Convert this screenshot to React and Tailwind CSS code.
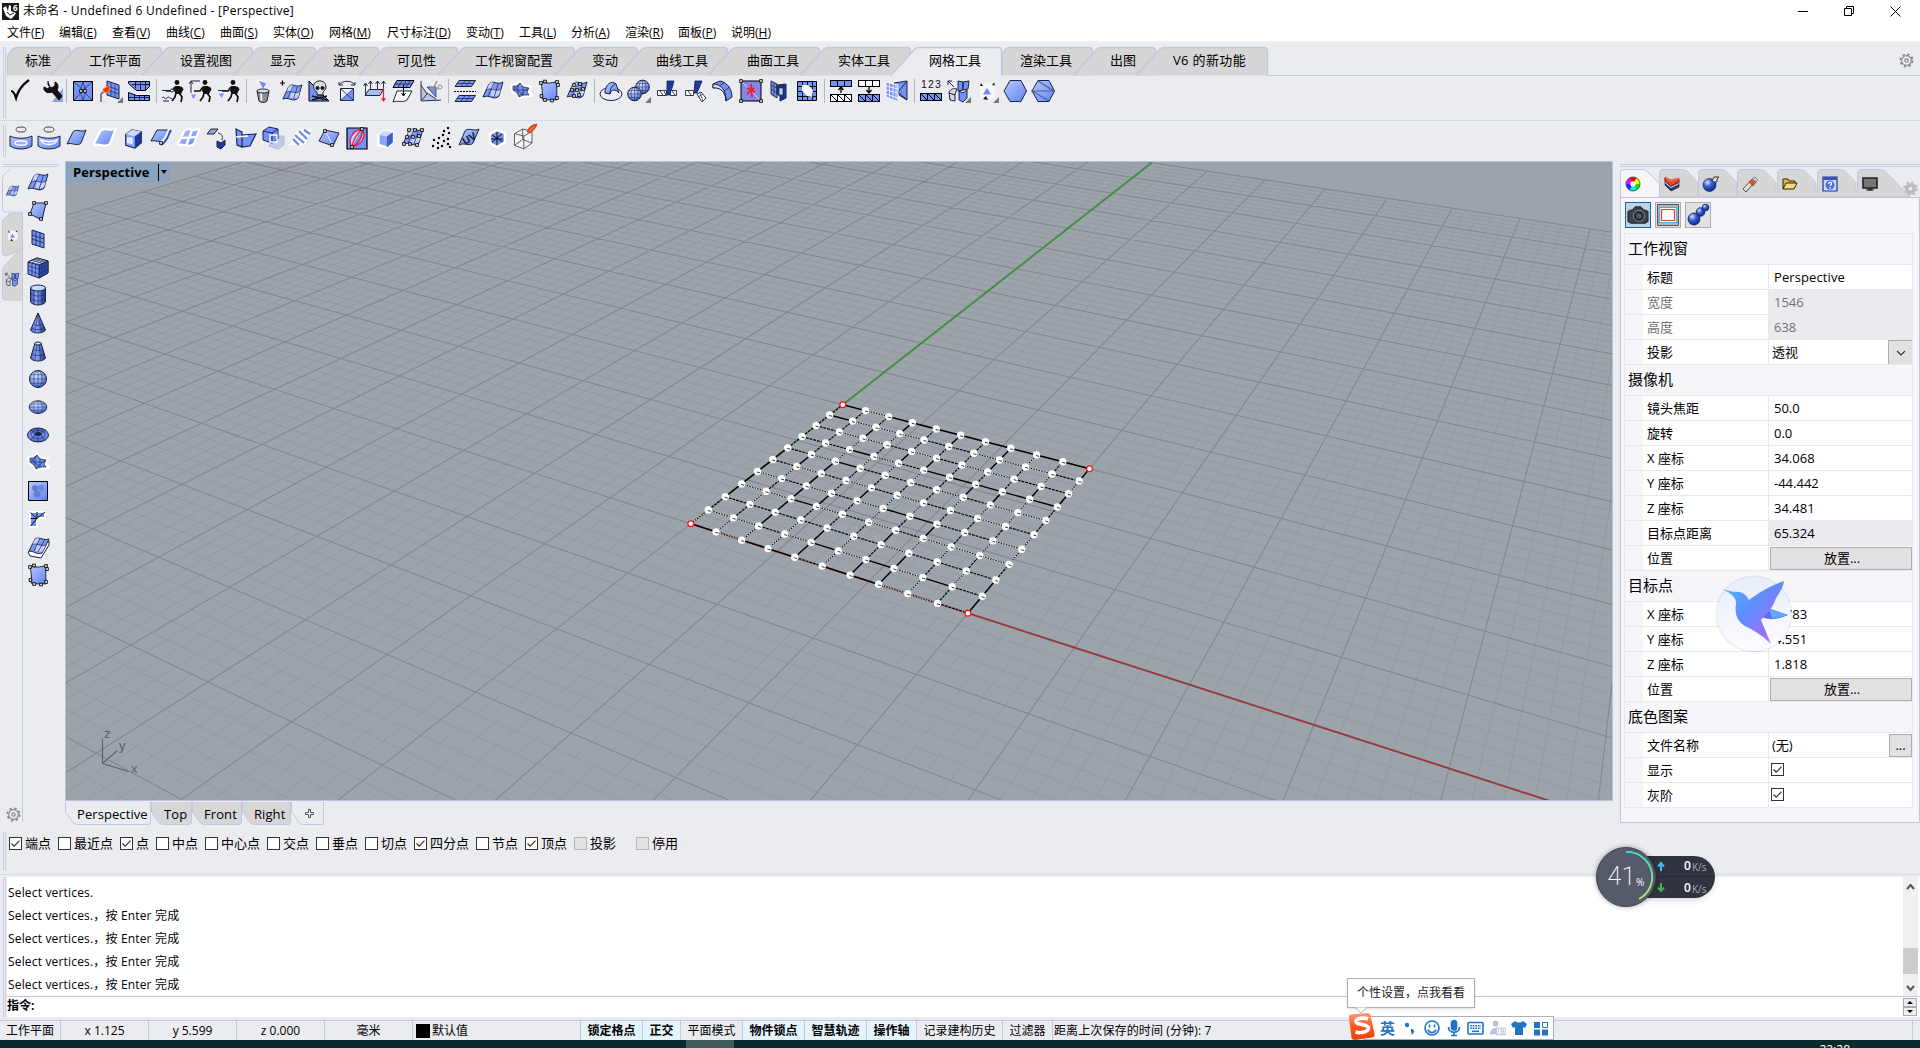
import React from "react";

const FONT = "font-['Open_Sans','Noto_Sans_CJK_SC',sans-serif]";
const K = "#1c2444";
const B = "#7391f6";
const N = "#1c3a9c";

/* ---------- icon primitives (24 x 24 drawing box) ---------- */
const Ico = ({ children, className = "size-6" }) => (
  <svg viewBox="0 0 24 24" className={className + " shrink-0"} fill="none" stroke={K} strokeWidth="1">
    {children}
  </svg>
);
const PATCH = "M2 18 8 6c4-4 8 1 13-2l-5 13c-4 4-9-1-14 1Z";
const Patch = ({ glow }) => (
  <>
    {glow && <path d={PATCH} stroke="#fff" strokeWidth="4.500" strokeLinejoin="round" />}
    <path d={PATCH} fill="url(#gb)" stroke={glow ? "none" : K} />
  </>
);
const MeshPatch = () => (
  <>
    <path d="M2 18 8 5c4-5 8 2 14-2l-4 14c-5 5-10-2-16 1Z" fill="#7f9bf8" />
    <path d="M8 5c2-2 3-2 5-1l-2 6c-2-1-3 0-5.500 1.500ZM11 10c3 1 6 2 9 0l-2 6c-3 2-6 1-8.500.5Z" fill="#c3d1ff" stroke="none" />
    <path d="M5 11.500c5-4 9 2 15-1.500M7 17l6-13M13 18l4.500-13.500" strokeWidth=".7" />
  </>
);
const Tri = ({ x, y, f = "#8390f8" }) => <path d={`M${x} ${y}h7l-3.500 6Z`} fill={f} stroke="#fff" strokeWidth=".8" />;
const Sq = ({ pts }) => pts.map(([x, y], i) => <rect key={i} x={x - 1.3} y={y - 1.3} width="2.6" height="2.6" fill="#fff" stroke="#000" strokeWidth=".9" />);
const Corner = () => <path d="M24 18v6h-6Z" fill="#777" stroke="none" />;
const Runner = ({ k }) => (
  <>
    <circle cx="16" cy="3.500" r="2.400" fill="#111" stroke="none" />
    <path d="M14 7h5l3 4-2 4h-5l-2-3Z" fill="#111" stroke="none" />
    <path d="M14 8l-3 4H5M15 14l-1 4-3 4M18 14l3 4-1 5M20 8l2 3" stroke="#111" strokeWidth="1.700" fill="none" />
    {k === 0 && <><path d="M1 11.500h9M1 19c2-3 3 3 5 0s3 2 5 0M2 22h6" /><circle cx="11" cy="11.500" r="1.500" fill="#fff" /></>}
    {k === 1 && <><path d="M2 14V3M0 5l2-3 2 3M2 2h9" /><Tri x={1} y={15} /></>}
    {k === 2 && <><path d="M1 11.500h9" /><Tri x={1} y={14} /></>}
  </>
);
const Ball = ({ cx, cy, r }) => (
  <>
    <circle cx={cx} cy={cy} r={r} fill="url(#gs)" />
    <path d={`M${cx - r} ${cy}h${2 * r}M${cx} ${cy - r}v${2 * r}M${cx - r * 0.87} ${cy - r / 2}h${r * 1.74}M${cx - r * 0.87} ${cy + r / 2}h${r * 1.74}`} strokeWidth=".5" />
    <ellipse cx={cx} cy={cy} rx={r / 2} ry={r} strokeWidth=".5" />
  </>
);
const Strip = ({ y, f = "#fff" }) => (
  <><rect x="1.500" y={y + 0.5} width="21" height="7" fill={f} stroke="#000" /><path d={`M8.500 ${y}v8M15.500 ${y}v8`} stroke="#000" /><path d={`M2 ${y + 1}l6 6M9 ${y + 1}l6 6M16 ${y + 1}l6 6`} stroke="#000" /></>
);
const Cells = ({ y, f }) => <><rect x="1.500" y={y + 0.5} width="21" height="6" fill={f} stroke="#000" /><path d={`M8.500 ${y}v7M15.500 ${y}v7`} stroke="#000" /></>;
const Scatter = () => (
  <>
    <path d="M5 5 12 4 20 5 20 18 12 21 5 19Z" fill="#f5f5fa" stroke="none" />
    <path d="M6 4 8 7H5ZM17 5l3-1-1 3ZM8 20l3-3 2 4Z" fill="#111" stroke="none" />
    <path d="M12 8l5 8H7Z" fill="#7b86fa" stroke="#fff" />
  </>
);
const Match = () => (
  <>
    <path d="M1 2l6 6M1 2v4M1 2h4" />
    <path d="M11 2l5 1v8l-5 1ZM16 3l6-1-1 8-5 1Z" fill={B} />
    <path d="M12 12l4 2 4-3v8l-4 4-4-2Z" fill={B} />
    <path d="M2 13c2-3 4-4 8-3l-2 5v7l-5-1Z" fill="#d9dade" /><path d="M2 14l6 2" />
  </>
);
const Blob = () => (
  <>
    <path d="M3 7l5-1 3-3 3 4 7 1-2 4 3 4-7 1-5 2-1-4-5-3Z" fill={B} stroke="#fff" strokeWidth="3.500" />
    <path d="M4 7l5 0 2-3 3 4 6 1-2 4 2 3-6 0-4 2-2-4-4-3Z" fill={B} strokeWidth=".7" />
    <path d="M4 11h15M9 5v10M14 7v10M5 8l9 8M11 4l-6 7M19 9l-9 8" strokeWidth=".6" />
  </>
);
const Pillow = () => (
  <>
    <path d="M4 3c5 1 9 2 17-1-2 6-1 12-1 19-5-1-10 1-15-1 1-6 0-11-1-17Z" fill="url(#gb)" />
    <Sq pts={[[4, 4], [8, 2.5], [20, 3], [21, 6], [20, 19], [15, 21.5], [8, 21], [4.5, 17]]} />
  </>
);

const row1 = [
  <Ico><path d="M2 12c3 0 4 4 5 7C9 11 13 6 20 1" stroke="#000" strokeWidth="2.200" /></Ico>,
  <Ico className="ml-1.5 size-6"><path d="M12 23h11V9Z" fill="#8fa3dc" stroke="none" /><path d="M8 2v4l3 3 4-2V3c3 1 4 5 2 8l5 6-3 4-7-8c-5 2-9-1-8-5l4 2 2-3" fill="#111" stroke="#111" /></Ico>,
  "|",
  <Ico><path d="M2.500 2.500h19v19h-19Z" fill={B} stroke="#000" /><path d="M3 3l9 8 9-8M3 21l9-9 9 9M12 3 9 12l3 9 3-9Z" strokeWidth=".7" /><Sq pts={[[10, 12], [14, 12]]} /></Ico>,
  <Ico><path d="M8 2l12 4v14L8 16Z" fill={B} /><path d="M8 7l12 4M8 11l12 4M12 4v13M16 6v13" strokeWidth=".6" /><path d="M2 23v-8l5-4" stroke="#777" strokeWidth="1.800" /><path d="M4 12c-1-4 5-3 6-6 2 4 0 7-3 8Z" fill="#f22d14" stroke="#ff9a18" /><Corner /></Ico>,
  <Ico><path d="M1.500 2.500h21v5l-4 4h-9l-8-7ZM1.500 13.500l8 3h13v5h-21Z" fill={B} stroke="#000" /><path d="M5 5.500h18M8.500 2v7M13.500 2v9M18.500 2v9M7.500 15v7M12.500 16v6M17.500 16v6M2 18.500h20" stroke="#000" strokeWidth=".8" /></Ico>,
  "|",
  <Ico><Runner k={0} /></Ico>, <Ico><Runner k={1} /></Ico>, <Ico><Runner k={2} /></Ico>,
  "|",
  <Ico><path d="M7 1l9 3-4 7Z" fill="#7d88f8" stroke="#fff" /><path d="M6 12l2 10c3 2 6 2 8 0l2-10Z" fill="#8d8d8d" /><path d="M10 13l.5 9" stroke="#eee" strokeWidth="2" /><ellipse cx="12" cy="12" rx="6" ry="2" fill="#ddd" /></Ico>,
  <Ico><g transform="translate(2 3) scale(.95)"><MeshPatch /></g><path d="M1 4h5M3.500 1.500v5" stroke="#000" strokeWidth="1.200" /></Ico>,
  <Ico><path d="M2 2v20h20Z" fill={B} stroke="#000" /><path d="M5 17l15 4M20 17 5 21" stroke="#111" strokeWidth="1.600" /><path d="M7 5c3-5 12-4 12 3 0 3-2 4-3 5v3h-6v-3C7 12 6 8 7 5Z" fill="#ddd" stroke="#222" /><circle cx="10.500" cy="9" r="1.600" fill="#000" /><circle cx="15.500" cy="9" r="1.600" fill="#000" /><path d="M11 15v3M13 15v3M15 15v3" /></Ico>,
  <Ico><path d="M4 6C8 1 16 1 20 6M20 6V3M20 6h-4M4 6V3M4 6h4" /><path d="M5.500 9.500h13v12h-13Z" fill="#e8edff" stroke="#222" /><path d="M18.500 9.500v12h-13Z" fill={B} strokeWidth=".7" /><path d="M6 10l12 11" strokeWidth=".8" /></Ico>,
  <Ico><path d="M6 10.500h14l-3 6H2Z" fill="#a9bbf5" /><path d="M2.500 16V5M7.500 11V2M14.500 11V2M20.500 11V2M.5 7l2-3 2 3M5.500 5l2-3 2 3M12.500 5l2-3 2 3M18.500 5l2-3 2 3" strokeWidth=".9" /><path d="M20.500 9v13M18.500 19l2 3 2-3" stroke="#e8202a" strokeWidth="1.200" /></Ico>,
  <Ico><path d="M6 1.500h17l-4 7H2Z" fill={B} stroke="#000" /><path d="M4 5h17M11 2 7 8M15 2l-3 6M19 2l-4 6" strokeWidth=".8" /><path d="M6 12h15l-5 9c-5 3-9 0-14 2Z" fill="#fff" /><path d="M12.500 6v11M10.500 14l2 3 2-3" stroke="#000" /></Ico>,
  <Ico><path d="M2 22V8l13 11 7 3Z" fill="#b9c4e6" stroke="none" /><path d="M8 8h9v10Z" fill={B} strokeWidth=".7" /><path d="M2 2v20M2 22l20-1M2 6l6 9-5 6M8 14l9 6" strokeWidth=".9" /><path d="M13 12l5-10M11 8l8 2" stroke="#8e8e8e" strokeWidth="1.400" /><circle cx="21" cy="8" r="2" stroke="#8e8e8e" /></Ico>,
  "|",
  <Ico><path d="M6 1.500h16.500l-4 6H2Z" fill={B} stroke="#222" /><path d="M6 16.500h16.500l-4 6H2Z" fill={B} stroke="#222" /><path d="M4 4.500h17M12 2 8 7M17 2l-4 5M4 19.500h17M12 17l-4 5M17 17l-4 5" strokeWidth=".7" /><path d="M1 12.500h22" stroke="#000" strokeDasharray="2 1" /></Ico>,
  <Ico><MeshPatch /></Ico>,
  <Ico><Blob /></Ico>,
  <Ico><Pillow /></Ico>,
  <Ico><MeshPatch /><Sq pts={[[9, 6], [15, 5], [7, 11], [12, 11], [18, 10], [9, 17], [14, 16]]} /></Ico>,
  "|",
  <Ico><ellipse cx="12" cy="15" rx="11" ry="6.500" fill="#eceef4" /><path d="M6 14C6 5 13 1 17 5l3 9c-3-4-8-4-9 1Z" fill="url(#gb)" /><path d="M11 15c0-6 3-9 5-10" /></Ico>,
  <Ico><Ball cx={15.5} cy={8} r={6.8} /><Ball cx={7.5} cy={15} r={6.8} /><Corner /></Ico>,
  <Ico><path d="M12 2h7l-4 14h-3Z" fill={N} stroke="#0d1d5c" strokeWidth=".8" /><path d="M2.500 11.500h9v5h-9ZM15.500 11.500h6v5h-6ZM5 12l3 4M9 12l2 4M17 12l3 4" fill="#fff" strokeWidth=".9" /></Ico>,
  <Ico><path d="M12 2h7l-5 12h-3Z" fill={N} stroke="#0d1d5c" strokeWidth=".8" /><path d="M2.500 11.500h8v5h-8ZM5 12l3 4M14 15l4-2 5 6-4 4Z" fill="#fff" strokeWidth=".9" /><path d="M17 14l3 8M15 18l5-3" strokeWidth=".7" /></Ico>,
  <Ico><path d="M2 5l7-3c6 1 12 7 12 16l-6 4C15 13 9 7 2 9Z" fill={B} /><path d="M2 5c8 0 13 6 13 17C15 13 9 8 2 9Z" fill="#dfe3ee" /><path d="M8 7l6-4M13 12l6-4" strokeWidth=".8" /></Ico>,
  <Ico><path d="M2 2h20v20H2Z" fill="#8284e6" stroke="#000" /><path d="M2 2l20 20" stroke="#d4d8f5" /><path d="M12 5l1 13M8 15l7-6M8 9l8 4" stroke="#ee1c25" strokeWidth="1.800" /><Sq pts={[[2, 2], [22, 2], [2, 22], [22, 22]]} /></Ico>,
  <Ico><path d="M4 2l6 3v14l-6-4Z" fill={B} /><path d="M10 6l9-1v14l-6 3v-5l-3-2Z" fill={N} /><path d="M7 4v13M4 6l6 3M4 10l6 4M16 5v15M10 8l9-1" strokeWidth=".7" /><path d="M12 9h4v7h-4Z" fill="#c5d2ff" strokeWidth=".7" /></Ico>,
  <Ico><path d="M2.500 2.500h19v19h-19Z" fill={B} stroke="#000" /><path d="M7.500 2v20M12.500 2v20M17.500 2v20M2 7.500h20M2 12.500h20M2 17.500h20" stroke="#000" strokeWidth=".9" /><path d="M7 6h6l5 5-1 7-5-1-5-5Z" fill="#f4f5ff" stroke="none" /></Ico>,
  "|",
  <Ico><Cells y={1} f={B} /><Strip y={15} /><path d="M12 14V8M9.500 11 12 8l2.500 3" stroke="#000" strokeWidth="1.300" /></Ico>,
  <Ico><Cells y={1} f="#fff" /><Strip y={15} f={B} /><path d="M12 8v6M9.500 11 12 14l2.500-3" stroke="#000" strokeWidth="1.300" /></Ico>,
  <Ico><path d="M9 4l13-2v19l-8-5Z" fill={B} /><path d="M22 2 13 13l9 8" /><path d="M1 3l12 3v17L1 18Z" fill="#7c92ee" stroke="#fff" /><path d="M4.500 4v16M8 5v16M11 6v16M1 7l12 3M1 11l12 3M1 15l12 4" stroke="#fff" strokeWidth=".8" /></Ico>,
  "|",
  <Ico><text x="12.500" y="9" textAnchor="middle" fontSize="10.500" letterSpacing="1.200" fill="#111" stroke="none" fontFamily="Liberation Sans">123</text><Strip y={14} f={B} /></Ico>,
  <Ico><Match /><Corner /></Ico>,
  <Ico><Scatter /><Corner /></Ico>,
  <Ico><path d="M7 1.500h11l5.500 10.500L18 22.500H7L1 12Z" fill="url(#gb)" /></Ico>,
  <Ico><path d="M7 1.500h11l5.500 10.500L18 22.500H7L1 12Z" fill="url(#gb)" /><path d="M7 2l16 10H1l17 10" strokeWidth="1.100" stroke="#4a5f96" /></Ico>,
];

const Basin = ({ n }) => (
  <>
    <ellipse cx="12" cy="3.500" rx="5" ry="2.500" stroke="#444" />
    <path d="M1 10c6 3 16 3 22 0v10c-6 4-16 4-22 0Z" fill="url(#gb)" />
    <path d={n ? "M4 14c5 2 11 2 16 0-1 6-15 6-16 0Z" : "M6 17c0-3 12-3 12 0s-12 3-12 0Z"} fill="#9fb4ff" stroke="#fff" strokeWidth="1.500" />
  </>
);
const Cube = ({ s }) => (
  <><path d="M4 8l7-5 10 2v12l-7 6-10-3Z" fill="#8ba5fa" stroke={s ? "#fff" : K} strokeWidth={s ? 3 : 1.2} /><path d="M4 8l10 2 7-5-10-2Z" fill="#cdd8ff" stroke="none" /><path d="M14 10l7-5v12l-7 6Z" fill={s ? "#3f5fc8" : N} stroke="none" /></>
);
const row2 = [
  <Ico><Basin n={0} /></Ico>, <Ico><Basin n={1} /></Ico>,
  <Ico><Patch /></Ico>, <Ico><Patch glow /></Ico>,
  <Ico><g transform="translate(1 1) scale(.92)"><Cube /><path d="M6 12h5v6l-5-1Z" fill="#dfe6ff" stroke="#fff" /></g></Ico>,
  <Ico><path d="M2 15 8 4h12l-6 10c-4 3-8 0-12 1Z" fill="url(#gb)" /><path d="M22 4c-3 5-3 11-10 15" stroke="#2b4bb5" strokeWidth="2" /><path d="M20 3c-3 5-3 10-9 13" stroke="#fff" strokeWidth="1.600" /><Sq pts={[[12, 17]]} /></Ico>,
  <Ico><Patch glow /><path d="M4 12l16-1M9 20l6-16" stroke="#fff" strokeWidth="2.500" /></Ico>,
  <Ico><path d="M2 8l4-5h7l-4 5Z" fill="#9ba7c8" /><path d="M13 7c4 1 5 3 4 7" /><path d="M12 15l4 2 4-3v5l-4 4-4-2Z" fill={N} /></Ico>,
  <Ico><path d="M3 3l6 3v15l-5-2ZM9 9l14-1-6 12-8 1Z" fill={B} strokeWidth="1.200" /><path d="M3 11l12-1" stroke="#fff" strokeWidth="1.500" /></Ico>,
  <Ico><path d="M12 10h11v9l-6 4-9-3Z" fill="#c3cbe8" stroke="#b4bbd8" /><path d="M2 5l6-4 9 2v10l-6 4-9-3Z" fill={B} /><path d="M2 5l9 2v9M11 7l6-4" /><path d="M9 9h7v7H9Z" stroke="#fff" strokeWidth="1.300" /></Ico>,
  <Ico><path d={PATCH} fill="#fff" stroke="#fff" strokeWidth="2" /><path d="M10 5l8 8M6 9l9 8M15 4l6 4M4 13l6 6" stroke="#6d88dc" strokeWidth="2.200" /></Ico>,
  <Ico><path d="M2 15 8 4l14 3-6 13Z" fill="url(#gb)" /><path d="M8 4l8 16" stroke="#eef" /><Sq pts={[[8, 5], [15, 19]]} /></Ico>,
  <Ico><path d="M2 2h20v21H2Z" fill={B} stroke="#000" strokeWidth="1.200" /><path d="M17 3C8 4 2 14 7 21c9-2 15-10 10-18ZM17 3C12 8 8 14 7 21M17 3c1 8-3 14-10 18" stroke="#e3234a" strokeWidth="1.300" fill="#cfd4f5" /><Sq pts={[[17, 3], [7, 21]]} /></Ico>,
  <Ico><g transform="translate(2 2) scale(.85)"><Cube s /></g></Ico>,
  <Ico><MeshPatch /><Sq pts={[[8, 4], [14, 4], [21, 4], [6, 11], [12, 11], [18, 10], [3, 18], [9, 18], [16, 19]]} /></Ico>,
  <Ico>{[[19, 2], [15, 5], [20, 7], [14, 9], [10, 12], [19, 13], [5, 14], [15, 15], [9, 17], [4, 20], [13, 20], [19, 18], [21, 21], [9, 22]].map(([x, y], i) => <circle key={i} cx={x} cy={y} r="1.200" fill="#000" stroke="none" />)}</Ico>,
  <Ico><path d="M2 19 8 5c4-4 9 1 14-2l-6 14c-4 4-9-1-14 2Z" fill="url(#gb)" /><text x="12" y="16" fontSize="10" fontWeight="700" textAnchor="middle" fill="#111" stroke="none" transform="rotate(-30 12 12)" fontFamily="Liberation Sans">UV</text></Ico>,
  <Ico><path d="M5 8l7-4 8 3v9l-8 5-7-4Z" fill={B} stroke="#fff" strokeWidth="2.500" /><path d="M12 6v13M7 9l11 7M17 8 7 16M6 13h12" stroke="#111" /></Ico>,
  <Ico className="-mt-1 size-7"><path d="M3 10l7-4 8 2v10l-7 5-8-3ZM3 10l8 2v11M11 12l7-4M10 6v9l-7 5M10 15l8 3" stroke="#555" strokeWidth=".8" fill="#fff" fillOpacity=".4" /><path d="M14 8c1-3 5-6 8-6-1 3-4 6-6 7Z" fill="#f26a1b" stroke="#c33" /></Ico>,
];

const side = [
  <Ico><MeshPatch /></Ico>,
  <Ico><path d="M8 4h12l-4 17L4 15Z" fill="url(#gb)" /><Sq pts={[[8, 4], [20, 4], [15, 20], [4, 15]]} /></Ico>,
  <Ico><path d="M6 3l12 4v14L6 17Z" fill={B} /><path d="M10 4v14M14 6v14M6 8l12 4M6 12l12 4" strokeWidth=".8" /></Ico>,
  <Ico><path d="M2 7l9-4 11 3v12l-9 5-11-4Z" fill={B} /><path d="M2 7l11 3 9-4-11-3Z" fill="#d3dcff" /><path d="M13 10l9-4v12l-9 5Z" fill="#2f4fb8" /><path d="M6 8v12M9.500 9v12M2 11l11 3 9-4M2 15l11 4 9-5M16 9v12M19 7v12M5 5l11 3M8 4l11 3M6 8l8-4M10 9l8-4" strokeWidth=".6" /></Ico>,
  <Ico><path d="M4.500 5v14c3 4 12 4 15 0V5Z" fill="url(#gd)" /><ellipse cx="12" cy="5" rx="7.500" ry="3" fill="#c9d6ff" /><path d="M4.500 10c3 4 12 4 15 0M4.500 15c3 4 12 4 15 0M8 8v13M12 8v14M16 8v13" strokeWidth=".6" /></Ico>,
  <Ico><path d="M12 2 4.500 19c2 4 13 4 15 0Z" fill="url(#gd)" /><path d="M12 2 9 21M12 2l3 19M8 13c2 2 6 2 8 0M6 17c2 2 10 2 12 0" strokeWidth=".6" /></Ico>,
  <Ico><path d="M9 4 4.500 19c2 4 13 4 15 0L15 4Z" fill="url(#gd)" /><ellipse cx="12" cy="4.500" rx="3" ry="1.500" fill="#dce4ff" /><path d="M11 6 9 21M13 6l2 15M7.500 10c2 2 7 2 9 0M6 15c2 2 10 2 12 0" strokeWidth=".6" /></Ico>,
  <Ico><Ball cx={12} cy={12} r={8.5} /></Ico>,
  <Ico><g transform="translate(0 3.500) scale(1 .72)"><Ball cx={12} cy={12} r={8.8} /></g></Ico>,
  <Ico><ellipse cx="12" cy="12" rx="10.500" ry="7" fill="url(#gt)" /><ellipse cx="12" cy="11" rx="3.500" ry="1.500" fill="#12245e" /><path d="M5 7l3 3M19 7l-3 3M12 5v4M12 13v6M5 17l4-5M19 17l-4-5" strokeWidth=".6" /><ellipse cx="12" cy="11.500" rx="7" ry="4" strokeWidth=".6" /></Ico>,
  <Ico><Blob /></Ico>,
  <Ico><path d="M2.500 2.500h19v19h-19Z" fill="url(#gb)" stroke="#000" /><circle cx="9" cy="9" r="3" fill="#3d59b5" stroke="none" opacity=".6" /><circle cx="15" cy="9" r="3" fill="#4c68c8" stroke="none" opacity=".5" /><circle cx="11" cy="15" r="3.500" fill="#3d59b5" stroke="none" opacity=".5" /></Ico>,
  <Ico><path d="M4 5h15v6h-8v9H4Z" fill={B} stroke="#fff" strokeWidth="2" /><path d="M4.500 5.500l6.500 6V5M19 5l-8 6.500H4.500M11 11.500l-6.500 7.500" stroke="#111" /></Ico>,
  <Ico><path d="M2 17l2 4 11 2 8-13V6Z" fill="#fff" /><path d="M3 16 9 4c4-3 8 2 14 0l-7 14c-5 2-8-2-13-2Z" fill="#7f9bf8" /><path d="M9 4c2-1 3-1 5-.5l-3 6-5 .5ZM11 10c3 1 5 1 9 0l-4 7-7-1Z" fill="#c3d1ff" stroke="none" /><path d="M6 10c5-3 9 2 14 0M8 16l6-13M12 17l7-13" strokeWidth=".7" /></Ico>,
  <Ico><Pillow /></Ico>,
];

/* ---------- perspective projection of the construction plane ---------- */
const CAM = [34.068, -44.442, 34.481];
const TGT = [5.783, 4.551, 1.818];
const FOCAL = (319 * 50) / 12;
const sub = (a, b) => a.map((v, i) => v - b[i]);
const dot = (a, b) => a[0] * b[0] + a[1] * b[1] + a[2] * b[2];
const norm = (a) => { const l = Math.hypot(...a); return a.map((v) => v / l); };
const FWD = norm(sub(TGT, CAM));
const RGT = norm([FWD[1], -FWD[0], 0]);
const UP = [RGT[1] * FWD[2], -RGT[0] * FWD[2], RGT[0] * FWD[1] - RGT[1] * FWD[0]];
const view = (x, y) => { const d = sub([x, y, 0], CAM); return [dot(d, RGT), dot(d, UP), dot(d, FWD)]; };
const toScreen = ([r, u, f]) => [773 + (r / f) * FOCAL, 319 - (u / f) * FOCAL];
const project = (x, y) => toScreen(view(x, y));
const segment = (x1, y1, x2, y2) => {
  let a = view(x1, y1), b = view(x2, y2);
  const near = 8;
  if (a[2] < near && b[2] < near) return "";
  const cut = (p, q) => { const t = (near - p[2]) / (q[2] - p[2]); return p.map((v, i) => v + t * (q[i] - v)); };
  if (a[2] < near) a = cut(a, b);
  if (b[2] < near) b = cut(b, a);
  const p = toScreen(a), q = toScreen(b);
  return `M${p[0].toFixed(1)} ${p[1].toFixed(1)}L${q[0].toFixed(1)} ${q[1].toFixed(1)}`;
};
const E = 70;
let minor = "", major = "";
for (let i = -E; i <= E; i++) {
  const s = segment(i, -E, i, E) + segment(-E, i, E, i);
  if (i % 5 === 0) major += s; else minor += s;
}
/* edge weight per mesh cell: S solid, M broken, D dotted */
const ALONG_X = ["SDSSMSSDDM", "DDMDSDSDSM", "MMMMMMDMMM", "DDSDMDMDDD", "DMDMDSSMMD", "MDMDMDMMDM", "MDSMMMDMDD", "MMSDMSSSSS", "MDDMDMDDMM", "SDDDMMDDDM", "SDSSSSSSSS"];
const ALONG_Y = ["DMSSSSMMMM", "DMDMDSMMMM", "DSSSSSDDSM", "DDMSMMDMDS", "SSMMSMDSMM", "DDMDDMDSMS", "SMSMDMMMMM", "SSDSMDSMSS", "DMDMMDSMMD", "MDMDMDDSDM", "SSMDDMMSDS"];
const meshEdges = { S: "", M: "", D: "" };
for (let j = 0; j <= 10; j++)
  for (let i = 0; i < 10; i++) {
    meshEdges[ALONG_X[j][i]] += segment(i * 1.5, j * 1.5, i * 1.5 + 1.5, j * 1.5);
    meshEdges[ALONG_Y[j][i]] += segment(j * 1.5, i * 1.5, j * 1.5, i * 1.5 + 1.5);
  }
const meshPoints = [];
for (let j = 0; j <= 10; j++) for (let i = 0; i <= 10; i++) meshPoints.push([...project(i * 1.5, j * 1.5), (i % 10 === 0) && (j % 10 === 0)]);

const Viewport = () => (
  <div className="relative h-[640px] w-[1548px] shrink-0 overflow-hidden border border-[#b9c1d9] bg-[#9da3aa]">
    <svg width="1546" height="638" className="block" fill="none">
      <path d={minor} stroke="#949aa1" strokeWidth="1" />
      <path d={major} stroke="#85868d" strokeWidth="1.1" />
      <path d={segment(0, 0, E, 0)} stroke="#963c3e" strokeWidth="1.9" />
      <path d={segment(0, 0, 0, E)} stroke="#3f9040" strokeWidth="1.9" />
      <path d={meshEdges.D} stroke="#dcdee0" strokeWidth="1.100" />
      <path d={meshEdges.D} stroke="#000" strokeWidth="1.100" strokeDasharray="1.500 1.200" />
      <path d={meshEdges.M} stroke="#c4c7ca" strokeWidth="1.100" />
      <path d={meshEdges.M} stroke="#000" strokeWidth="1.200" strokeDasharray="3 .8" />
      <path d={meshEdges.S} stroke="#000" strokeWidth="1.400" />
      {meshPoints.map(([x, y, c], i) => (
        <g key={i}>
          <circle cx={x} cy={y} r={c ? 2.9 : 3.7} fill="#fff" stroke={c ? "#ff1414" : "none"} strokeWidth="1.300" />
          {!c && <path d={`M${x - 0.5} ${y + 0.5}l3 .8`} stroke="#222" strokeWidth=".9" />}
        </g>
      ))}
      <path d="M36.500 601.500v-25M36.500 601.500l26 8M36.500 601.500l15-13" stroke="#5c6167" strokeWidth="1.100" />
      <g fill="#5c6167" fontSize="13" fontFamily="Liberation Sans"><text x="38" y="576">z</text><text x="53" y="588">y</text><text x="65" y="611">x</text></g>
    </svg>
    <div className="absolute left-0 top-0 flex h-[20px] w-[104px] items-center bg-[#8ca3bd]">
      <span className="w-[92px] pl-[7px] text-[13px] font-bold leading-none tracking-[0.1px]">Perspective</span>
      <span className="h-[17px] w-px bg-black" />
      <span className="ml-[2px] border-x-[3.5px] border-t-4 border-x-transparent border-t-black" />
    </div>
  </div>
);

/* ---------- top chrome ---------- */
const menus = [["文件", "F", 52], ["编辑", "E", 53], ["查看", "V", 54], ["曲线", "C", 54], ["曲面", "S", 53], ["实体", "O", 56], ["网格", "M", 58], ["尺寸标注", "D", 79], ["变动", "T", 53], ["工具", "L", 52], ["分析", "A", 54], ["渲染", "R", 53], ["面板", "P", 53], ["说明", "H", 54]];

/* label, right edge, text start */
const tabs = [["标准", 71, 25], ["工作平面", 162, 89], ["设置视图", 253, 180], ["显示", 316, 270], ["选取", 379, 333], ["可见性", 458, 397], ["工作视窗配置", 575, 475], ["变动", 638, 592], ["曲线工具", 728, 656], ["曲面工具", 820, 747], ["实体工具", 911, 838], ["网格工具", 1002, 929], ["渲染工具", 1093, 1020], ["出图", 1156, 1110], ["V6 的新功能", 1268, 1173]];

const ToolTab = ({ label, right, text, prev, active, first, afterActive }) => {
  const w = right - prev;
  const tail = `H${w - 4}q3.500 0 3.500 4V28.500`;
  const shape = first
    ? `M.5 28.500V9L5 3Q7 .5 10 .5${tail}`
    : afterActive
      ? `M.5 28.500V6L4 2Q5 .5 8 .5${tail}`
      : `M-20 28.500L3 3Q5 .5 8 .5${tail}`;
  return (
    <div className="relative h-[29px] shrink-0" style={{ width: w }}>
      <svg className="absolute left-0 top-0 overflow-visible" width={w} height="29">
        <path d={shape} fill={active ? "#ebecf0" : "#d6d6d6"} stroke="#c2c8de" strokeWidth="1.300" />
        {active && <path d={`M-19 28.500H${w - 1}`} stroke="#ebecf0" strokeWidth="2" />}
      </svg>
      <span className="relative block whitespace-nowrap text-[13px] leading-[26px]" style={{ paddingLeft: text - prev, letterSpacing: label[0] === "V" ? 0.35 : 0 }}>{label}</span>
    </div>
  );
};

const Gear = ({ className, solid }) => (
  <svg viewBox="0 0 16 16" className={className} fill="none" stroke="currentColor">
    <circle cx="8" cy="8" r={solid ? 4 : 5.2} strokeWidth={solid ? 4 : 1.2} /><circle cx="8" cy="8" r="6.600" strokeWidth={solid ? 2.4 : 1.8} strokeDasharray="2.590 2.590" />
    {!solid && <circle cx="8" cy="8" r="1.800" strokeWidth="1.200" />}
  </svg>
);

const ToolRow = ({ items, className }) => (
  <div className={"flex items-start " + className}>
    {items.map((it, i) => it === "|"
      ? <div key={i} className="flex h-6 w-1.5 shrink-0 justify-center"><span className="h-full w-px bg-[#b4b6bc]" /></div>
      : <div key={i} className="flex h-6 w-7 shrink-0 justify-center">{it}</div>)}
  </div>
);
const Grip = ({ className }) => <div className={"w-[3px] shrink-0 border-x border-[#c9cfe2] " + className} />;

/* ---------- right panel ---------- */
const panelIcons = [
  <svg viewBox="0 0 16 16" className="size-4" fill="none" strokeWidth="4">
    {["#f00", "#ff0", "#0e0", "#0ee", "#22f", "#f0f"].map((c, i) => <circle key={c} cx="8" cy="8" r="4.800" stroke={c} strokeDasharray="5.100 30" transform={`rotate(${i * 60 - 120} 8 8)`} />)}<circle cx="8" cy="8" r="7" stroke="#333" strokeWidth=".8" />
  </svg>,
  <svg viewBox="0 0 16 16" className="size-4"><path d="M1 2v7l6 6 8-4V4l-8 5Z" fill="#24367f" stroke="#222" strokeWidth=".7" /><path d="M1 6.500l6 5 8-4" stroke="#eee" strokeWidth="1" fill="none" /><path d="M1 1l6 3 8-2v4l-8 4-6-5Z" fill="#f0431e" stroke="#811" strokeWidth=".6" /><path d="M1 1l6 4 8-3" stroke="#ff8a66" fill="none" /></svg>,
  <svg viewBox="0 0 16 16" className="size-4 overflow-visible"><circle cx="6.500" cy="9" r="6.500" fill="url(#gn)" stroke="#15245e" strokeWidth=".7" /><path d="M9 5l2-4h5l-2 2v3h-3Z" fill="#ddd" stroke="#333" /></svg>,
  <svg viewBox="0 0 16 16" className="size-4"><path d="M1 13l8-9 3 3-8 9Z" fill="#ddd" stroke="#555" /><path d="M7 6l3-3 4 3-3 4Z" fill="#e8542b" stroke="#833" strokeWidth=".6" /><path d="M10 3l3-2 3 3-2 2Z" fill="#ccc" stroke="#555" strokeWidth=".6" /></svg>,
  <svg viewBox="0 0 16 16" className="size-4"><path d="M1 13V3h5l1 2h6v2" fill="#e8b93c" stroke="#222" /><path d="M1 13l3-6h11l-3 6Z" fill="#fbdc72" stroke="#222" /></svg>,
  <svg viewBox="0 0 16 16" className="size-4"><path d="M1 1h14v14H1Z" fill="#cdd9ff" stroke="#24348a" strokeWidth="1.200" /><path d="M1 1h14v3H1Z" fill="#3854c4" /><circle cx="8" cy="9" r="4.500" fill="#4d6ee0" /><path d="M6.500 8c0-2.500 3.500-2 3 0-.3 1-1.500 1-1.500 2M8 11v1.500" stroke="#fff" strokeWidth="1.300" fill="none" /></svg>,
  <svg viewBox="0 0 16 16" className="size-4"><path d="M1 2h14v10H1Z" fill="#777" stroke="#222" strokeWidth="1.600" /><path d="M6 12h4v2H6ZM4 14h8" stroke="#333" fill="#333" /></svg>,
];

const rows = [
  { h: "工作视窗" }, { l: "标题", v: "Perspective" }, { l: "宽度", v: "1546", dis: 1, shade: 1 }, { l: "高度", v: "638", dis: 1, shade: 1 }, { l: "投影", v: "透视", t: "select" },
  { h: "摄像机" }, { l: "镜头焦距", v: "50.0" }, { l: "旋转", v: "0.0" }, { l: "X 座标", v: "34.068" }, { l: "Y 座标", v: "-44.442" }, { l: "Z 座标", v: "34.481" }, { l: "目标点距离", v: "65.324", shade: 1 }, { l: "位置", t: "button" },
  { h: "目标点" }, { l: "X 座标", v: "5.783" }, { l: "Y 座标", v: "4.551" }, { l: "Z 座标", v: "1.818" }, { l: "位置", t: "button" },
  { h: "底色图案" }, { l: "文件名称", v: "(无)", t: "file" }, { l: "显示", t: "check" }, { l: "灰阶", t: "check" },
];

const Check = ({ on, off }) => (
  <span className={"flex size-[13px] shrink-0 items-center justify-center border " + (off ? "border-[#b4b4b4] bg-[#e2e2e2]" : "border-[#333] bg-white")}>
    {on && <svg viewBox="0 0 11 11" className="size-[11px]" fill="none" stroke="#333" strokeWidth="1.200"><path d="M1.500 5.500l2.700 2.700L9.500 2.700" /></svg>}
  </span>
);

const PropRow = ({ r }) => {
  if (r.h) return <div className="flex h-[31px] items-center border-b border-[#e9e9ed] pb-[2px] pl-[3px] text-[15px] leading-[28px]">{r.h}</div>;
  return (
    <div className={"flex h-[25px] border-b border-[#e9e9ed] text-[13px] leading-[24px] " + (r.dis ? "text-[#727272]" : "text-black")}>
      <div className="w-[18px] shrink-0" />
      <div className="w-[126px] shrink-0 border-r border-[#e9e9ed] bg-white pl-1">{r.l}</div>
      <div className={"flex grow justify-between " + (r.shade ? "bg-[#ebebef]" : "bg-white")}>
        {r.v && <span className={(r.t ? "pl-[3px]" : "pl-[5px]") + (r.v === "Perspective" ? " tracking-[0.1px]" : "")}>{r.v}</span>}
        {r.t === "select" && <span className="flex w-6 items-center justify-center border-l border-t border-[#adadad] bg-[#e1e1e1]"><svg width="10" height="6" fill="none" stroke="#333" strokeWidth="1.200"><path d="M1 1l4 4 4-4" /></svg></span>}
        {r.t === "button" && <span className="ml-px mt-px flex h-[23px] grow items-center justify-center border border-[#adadad] bg-[#e1e1e1] pb-px pl-0.5">放置...</span>}
        {r.t === "file" && <span className="mt-px flex h-[23px] w-[23px] items-center justify-center border border-[#adadad] bg-[#e1e1e1] pb-px">...</span>}
        {r.t === "check" && <span className="pl-0.5 pt-[5px]"><Check on /></span>}
      </div>
    </div>
  );
};

const RightPanel = () => (
  <div className="ml-[7px] mt-[3px] w-[300px] shrink-0">
    <div className="h-[3px] border-y border-[#c6cee2]" />
    <div className="mt-[2px] flex h-[28px]">
      {panelIcons.map((ic, i) => (
        <div key={i} className="relative h-[28px] shrink-0" style={{ width: i < 3 ? 39 : 40 }}>
          <svg className="absolute left-0 top-0 overflow-visible" width="40" height="28">
            <path d={i === 0 ? "M.5 28V4Q.5.5 4 .5H22Q26 .5 29 4L52 28" : i === 6 ? "M.5 28V4Q.5.5 4 .5H23Q27 .5 30 4L53 28" : "M.5 28V4Q.5.5 4 .5H23Q27 .5 30 4L39 14V28"} fill={i === 0 ? "#f6f6fa" : "#d6d6d6"} stroke="#c2c8de" />
            {i > 0 && <path d="M0 28h52" stroke="#c2c8de" />}
          </svg>
          <span className="relative ml-[5px] block pt-[7px]">{ic}</span>
        </div>
      ))}
      <Gear solid className="ml-[6px] mt-[12px] size-[15px] shrink-0 text-[#bdbdbd]" />
    </div>
    <div className="h-[626px] border border-[#bfc6dc] bg-[#f6f6fa] pl-[3px] pr-1.5">
      <div className="flex gap-1 pb-[5px] pl-px pt-1">
        <span className="flex size-[26px] items-center justify-center border border-[#2264a0] bg-[#b8d3ea]">
          <svg viewBox="0 0 24 24" className="size-[22px]"><path d="M1 8l5-2 3-3h6l3 3 5 2v11l-3 2H4l-3-2Z" fill="#3b4248" stroke="#1e2226" /><circle cx="13" cy="13" r="6" fill="#20262a" stroke="#8b9399" /><circle cx="13" cy="13" r="3" fill="#4d5a60" /></svg>
        </span>
        <span className="flex size-[26px] items-center justify-center border border-[#adadad] bg-[#e1e1e1]">
          <svg viewBox="0 0 24 24" className="size-6" fill="none"><path d="M1.500 1.500h21v21h-21Z" fill="#b5b5b5" stroke="#555" /><path d="M3.500 4.500h17v15h-17Z" fill="#fff" stroke="#39b8e8" strokeWidth="1.200" /><path d="M5.500 6.500h13v11h-13Z" fill="#fff" stroke="#e43a30" strokeWidth="1.200" /></svg>
        </span>
        <span className="flex size-[26px] items-center justify-center border border-[#adadad] bg-[#e1e1e1]">
          <svg viewBox="0 0 24 24" className="size-6" stroke="#0d1c66" strokeWidth=".8"><circle cx="8" cy="16" r="6" fill="url(#gn)" /><circle cx="14.500" cy="9" r="4.300" fill="url(#gn)" /><circle cx="19.500" cy="4.500" r="3.300" fill="url(#gn)" /></svg>
        </span>
      </div>
      <div className="border border-b-0 border-[#e9e9ed]">{rows.map((r, i) => <PropRow key={i} r={r} />)}</div>
    </div>
  </div>
);

/* ---------- bottom ---------- */
const snaps = [["端点", 1, 49], ["最近点", 0, 62], ["点", 1, 36], ["中点", 0, 49], ["中心点", 0, 62], ["交点", 0, 49], ["垂点", 0, 49], ["切点", 0, 49], ["四分点", 1, 62], ["节点", 0, 49], ["顶点", 1, 49], ["投影", 2, 62], ["停用", 2, 50]];
const viewTabs = [["Perspective", 86, 12, 1], ["Top", 41, 13], ["Front", 50, 12], ["Right", 49, 12]];
const status = [["工作平面", 61], ["x 1.125", 88], ["y 5.599", 88], ["z 0.000", 88], ["毫米", 88]];
const modes = [["锁定格点", 62, 1], ["正交", 38, 1], ["平面模式", 62, 0], ["物件锁点", 62, 1], ["智慧轨迹", 62, 1], ["操作轴", 50, 1], ["记录建构历史", 86, 0], ["过滤器", 50, 0]];

const ViewTab = ({ label, w, pl, active }) => (
  <div className="relative h-[23px] shrink-0" style={{ width: w }}>
    <svg className="absolute left-0 top-0" width={w} height="23"><path d={`M.5 0V10l7 10Q9 22.500 12 22.500H${w - 3}Q${w - .5} 22.500 ${w - .5} 20V0`} fill={active ? "#ebecf0" : "#d6d6d6"} stroke="#c2c8de" /></svg>
    <span className="relative block whitespace-nowrap text-[13px] leading-6 tracking-[0.08px]" style={{ paddingLeft: pl }}>{label}</span>
  </div>
);

const SogouBar = () => (
  <div className="absolute left-[1347px] top-[1012px] flex h-7 w-[208px] items-end">
    <svg viewBox="0 0 28 28" className="absolute left-0 top-0 z-10 size-7"><path d="M2 6Q1 3 4 2.500L20 1q3 0 3.500 2l4 19q.5 3-2 3.500L8 28q-3 0-3.500-2Z" fill="url(#go)" /><path d="M21 7c-4-1.500-12-1-12 2.500 0 4 12 2 12.500 6.500.3 4-8 5.500-13 4" fill="none" stroke="#fff" strokeWidth="3.600" /></svg>
    <div className="ml-4 flex h-[24px] w-[191px] items-center border border-[#a9b0b8] bg-white pl-4 text-[#2074c8]">
      <span className="w-[19px] text-[15px] font-bold leading-none">英</span>
      <svg viewBox="0 0 22 22" className="w-[22px]" fill="currentColor"><circle cx="8" cy="8" r="2.200" /><path d="M12 12c4-1 4 5 0 6 1-2 1-2 0-3Z" /></svg>
      <svg viewBox="0 0 22 22" className="w-[22px]" fill="none" stroke="currentColor" strokeWidth="1.600"><circle cx="11" cy="11" r="7" /><path d="M8.500 7.500v3M13.500 7.500v3M7 12.500c1 4 7 4 8 0" /></svg>
      <svg viewBox="0 0 22 22" className="w-[22px]" fill="none" stroke="currentColor" strokeWidth="1.700"><rect x="8.500" y="3.500" width="5" height="9.500" rx="2.500" fill="currentColor" /><path d="M5.500 10c0 7 11 7 11 0M11 15v4M8 18.500h6" /></svg>
      <svg viewBox="0 0 22 22" className="w-[22px]" fill="none" stroke="currentColor" strokeWidth="1.600"><rect x="3" y="5.500" width="15" height="11.500" rx="1" /><path d="M5 8.700h11M5 11.200h11" strokeDasharray="1.800 .8" /><path d="M7 14.300h7" /></svg>
      <svg viewBox="0 0 24 22" className="w-[23px]" fill="#b5c1d6"><circle cx="9" cy="7" r="3" /><path d="M3 18c0-8 12-8 12-3v3Z" /><rect x="10" y="11.500" width="9" height="7" fill="#fff" stroke="#b5c1d6" /><path d="M12 13v4M14 13h3v4h-3M14 15h3" stroke="#b5c1d6" fill="none" /></svg>
      <svg viewBox="0 0 20 22" className="w-[20px]" fill="currentColor"><path d="M5 4q4 3 8 0l4 3-2 4-2-1v8H5v-8l-2 1-2-4Z" /></svg>
      <svg viewBox="0 0 22 22" className="w-[22px]" fill="currentColor"><path d="M4 5h6v6H4ZM4 12.500h6v6H4ZM12 12.500h6v6h-6Z" /><path d="M12.500 5.500h5v5h-5Z" fill="#fff" stroke="currentColor" /></svg>
    </div>
  </div>
);

const Tooltip = () => (
  <div className="absolute left-[1347px] top-[978px] flex h-[30px] w-[128px] items-center justify-center border border-[#a9afb6] bg-white text-[12px] text-[#222] shadow-sm">
    个性设置，点我看看
    <svg className="absolute left-[7px] top-[28px]" width="12" height="7"><path d="M0 .5 6 6l6-5.500" fill="#fff" stroke="#a9afb6" /></svg>
  </div>
);

const Gauge = () => (
  <div className="absolute left-[1596px] top-[847px] h-[60px] w-[120px]">
    <div className="absolute right-[1px] top-[9px] flex h-[42px] w-[80px] flex-col rounded-r-full bg-[#30343e] shadow-md">
      {["M4 9V1M1 4.500 4 1l3 3.500", "M4 0v8M1 4.500 4 8l3-3.500"].map((d, i) => (
        <div key={i} className={"flex h-[21px] items-center pl-[22px] leading-none " + (i ? "" : "border-b border-[#262a32]")}>
          <svg width="8" height="9" fill="none" stroke={i ? "#3cb54a" : "#4fb4f0"} strokeWidth="2"><path d={d} /></svg>
          <span className="ml-[19px] text-[12px] font-semibold text-white">0</span>
          <span className="pl-px pt-0.5 text-[10px] text-[#a5a9b1]">K/s</span>
        </div>
      ))}
    </div>
    <div className="absolute left-0 top-0 flex size-[60px] items-center justify-center rounded-full border border-[#42464f] bg-[#565b69] shadow-[0_0_5px_rgba(0,0,0,0.35)]">
      <svg className="absolute inset-0" width="58" height="58" fill="none"><path d="M29 4a25 25 0 0 1 13 47" stroke="url(#ga)" strokeWidth="1.800" /></svg>
      <span className="font-['Roboto'] text-[25px] tracking-[0.5px] text-white [font-weight:200]">41</span>
      <span className="pt-2.5 text-[10px] text-white">%</span>
    </div>
  </div>
);

const Bird = () => (
  <svg className="absolute left-[1714px] top-[574px]" width="80" height="80" viewBox="0 0 80 80">
    <circle cx="40" cy="40" r="38.500" fill="#000" opacity=".07" />
    <circle cx="40" cy="40" r="37" fill="url(#gc)" />
    <path d="M46 42 54 34l20 7c-8 4-16 5-24 3Z" fill="#6468f4" />
    <path d="M55 35l19 6c-6 2-10 3-16 3Z" fill="#5faafb" />
    <path d="M8 15l12 3c7-1 12 2 15 8C45 18 58 11 70 7c-1 7-4 11-6 14l-2 3c-3 10-9 15-15 22l10 24C49 62 41 57 35 54 25 50 20 42 22 30c1-7-7-12-14-15Z" fill="url(#gbird)" />
  </svg>
);

const Defs = () => (
  <svg className="absolute size-0">
    <defs>
      <linearGradient id="gb" x1="0" y1="0" x2="1" y2="1"><stop stopColor="#b9caff" /><stop offset="1" stopColor="#6081f0" /></linearGradient>
      <linearGradient id="gd"><stop stopColor="#3e5fc9" /><stop offset=".4" stopColor="#8ba6fa" /><stop offset="1" stopColor="#16308a" /></linearGradient>
      <linearGradient id="gt" x2="0" y2="1"><stop stopColor="#3553b8" /><stop offset=".5" stopColor="#7d98f0" /><stop offset="1" stopColor="#4463cc" /></linearGradient>
      <radialGradient id="gs" cx=".4" cy=".3" r=".8"><stop stopColor="#dbe5ff" /><stop offset=".6" stopColor="#7c9bf4" /><stop offset="1" stopColor="#2b469f" /></radialGradient>
      <radialGradient id="gn" cx=".35" cy=".3" r=".8"><stop stopColor="#d9e4ff" /><stop offset=".4" stopColor="#3a60d8" /><stop offset="1" stopColor="#0a1b68" /></radialGradient>
      <linearGradient id="go" x2="0" y2="1"><stop stopColor="#ff9a73" /><stop offset=".5" stopColor="#fb5a25" /><stop offset="1" stopColor="#ee3f10" /></linearGradient>
      <linearGradient id="ga" x2="0" y2="1"><stop stopColor="#41dcd6" /><stop offset="1" stopColor="#b6ea6a" /></linearGradient>
      <linearGradient id="gc" x2="0" y2="1"><stop stopColor="#e6edfb" /><stop offset="1" stopColor="#fdfdff" /></linearGradient>
      <linearGradient id="gbird" x2="1" y2="1"><stop stopColor="#4fbcff" /><stop offset=".45" stopColor="#5f8cfb" /><stop offset=".75" stopColor="#9a72fb" /><stop offset="1" stopColor="#e36cf5" /></linearGradient>
    </defs>
  </svg>
);

export default function App() {
  return (
    <div className={"relative flex h-[1048px] w-[1920px] flex-col overflow-hidden bg-[#ebecf0] text-black " + FONT}>
      <Defs />
      <div className="flex h-[22px] shrink-0 items-center bg-white">
        <svg viewBox="0 0 17 17" className="ml-[2px] size-[17px]"><path d="M0 0h17v17H0Z" fill="#1a1a1a" /><path d="M1 5l3-2 2 5 1-6 2 1v5l5 2-2 3-3 3-5-3Z" fill="#fff" /><path d="M5 9l3 3 4-2" stroke="#222" fill="none" /><text x="11" y="8" fontSize="8" fill="#fff" fontWeight="700">6</text></svg>
        <span className="ml-1 whitespace-nowrap text-[12px] tracking-[0.28px]">未命名 - Undefined 6 Undefined - [Perspective]</span>
        <div className="ml-auto flex items-center gap-[35px] pr-[19px]">
          <svg width="11" height="11" stroke="#000"><path d="M0 5.500h10" /></svg>
          <svg width="11" height="11" stroke="#000" fill="none"><path d="M.5 2.500h7v7h-7ZM2.500 2.500v-2h7v7h-2" /></svg>
          <svg width="11" height="11" stroke="#000"><path d="M.5.500l10 10M10.500.500l-10 10" /></svg>
        </div>
      </div>
      <div className="flex h-[21px] shrink-0 border-b-2 border-[#f0f0f0] bg-white pl-[7px] text-[12px] leading-[21px]">
        {menus.map(([t, k, w]) => <span key={k} className="shrink-0 whitespace-nowrap" style={{ width: w }}>{t}(<u className="underline-offset-1">{k}</u>)</span>)}
      </div>

      <div className="flex h-[78px] shrink-0 border-b border-[#d3d7e6]">
        <Grip className="ml-[3px] mt-1 h-[72px]" />
        <div className="ml-px flex grow flex-col">
          <div className="mt-1 flex h-[29px] shrink-0">
            <div className="relative z-10 flex">
              {tabs.map(([label, right, text], i) => (
                <ToolTab key={label} label={label} right={right} text={text} prev={i ? tabs[i - 1][1] : 7} first={i === 0} active={i === 11} afterActive={i === 12} />
              ))}
            </div>
            <div className="flex grow justify-end border-b border-[#c2c8de] pr-1.5"><Gear className="mt-1.5 size-[15px] text-[#888]" /></div>
          </div>
          <ToolRow items={row1} className="mt-[3px]" />
        </div>
      </div>
      <div className="flex h-[37px] shrink-0">
        <Grip className="ml-[3px] mt-1 h-[32px]" />
        <ToolRow items={row2} className="ml-px mt-[5px]" />
      </div>

      <div className="mt-[3px] flex h-[665px] shrink-0">
        <div className="flex w-[65px] shrink-0 flex-col">
          <div className="ml-[3px] mt-[3px] h-[3px] w-14 shrink-0 border-y border-[#c9cfe2]" />
          <div className="flex grow">
            <div className="relative flex w-[22px] shrink-0 flex-col">
              <svg className="absolute left-0 top-0 overflow-visible" width="23" height="657" fill="none" stroke="#c2c8de">
                <path d="M22.500 84V656" />
                <path d="M22.500 46V82L6 89Q2.500 89 2.500 86V54L9 47Z" fill="#d6d6d6" />
                <path d="M22.500 80 6 97Q2.500 100 2.500 104V130Q2.500 133 6 133H22.500Z" fill="#d6d6d6" />
                <path d="M10 2 4 8Q2.500 10 2.500 13V42Q2.500 45 6 45H22.500V84" />
              </svg>
              <div className="relative flex flex-col gap-[29px] pl-[5px] pt-[17px]">
                <Ico className="size-[15px]"><MeshPatch /></Ico>
                <Ico className="size-[15px]"><Scatter /></Ico>
                <Ico className="size-[15px]"><Match /></Ico>
              </div>
              <Gear className="relative mb-1 ml-[6px] mt-auto size-[15px] text-[#888]" />
            </div>
            <div className="flex flex-col gap-1 pl-1 pt-1">{side.map((s, i) => <div key={i} className="h-6">{s}</div>)}</div>
          </div>
        </div>
        <div className="flex shrink-0 flex-col">
          <Viewport />
          <div className="flex h-6 shrink-0 pt-px">
            {viewTabs.map(([l, w, pl, a]) => <ViewTab key={l} label={l} w={w} pl={pl} active={a} />)}
            <div className="relative h-[23px] w-8">
              <svg width="34" height="23" fill="none" stroke="#c2c8de"><path d="M.5 0V10l7 10Q9 22.500 12 22.500H32.500V0" /><path d="M17.500 7.500h2v3h3v2h-3v3h-2v-3h-3v-2h3Z" stroke="#555" /></svg>
            </div>
          </div>
        </div>
        <RightPanel />
      </div>

      <div className="flex h-[49px] shrink-0 border-b border-[#d3d7e6]">
        <Grip className="ml-[3px] mt-[6px] h-[39px]" />
        <div className="ml-[3px] mt-[10px] flex h-[15px] text-[13px] leading-[15px]">
          {snaps.map(([t, s, w]) => <label key={t} className="flex shrink-0 items-center gap-[3px] whitespace-nowrap" style={{ width: w }}><Check on={s === 1} off={s === 2} />{t}</label>)}
        </div>
      </div>

      <div className="flex h-[142px] shrink-0 pt-[2px]">
        <Grip className="ml-[3px] mr-px h-[140px]" />
        <div className="grow bg-white">
          <div className="flex h-[120px] border-b border-[#c2c8de]">
            <div className="grow pl-px pt-1 text-[12px] leading-[23px] tracking-[0.17px]">
              <div>Select vertices.</div>
              {[1, 2, 3, 4].map((i) => <div key={i}>Select vertices.，按 Enter 完成</div>)}
            </div>
            <div className="mr-0.5 flex w-[15px] flex-col items-center bg-[#f0f0f0]">
              <svg className="mt-1.5 shrink-0" width="9" height="7" fill="none" stroke="#555" strokeWidth="2"><path d="M1 6l3.500-4L8 6" /></svg>
              <span className="mt-[58px] h-[26px] w-full bg-[#cdcdcd]" />
              <svg className="mb-1 mt-auto shrink-0" width="9" height="7" fill="none" stroke="#555" strokeWidth="2"><path d="M1 1l3.500 4L8 1" /></svg>
            </div>
          </div>
          <div className="flex h-5 justify-between">
            <span className="text-[12px] font-bold leading-[18px]">指令:</span>
            <div className="mr-[3px] flex h-full w-[14px] flex-col py-px">
              {["M3 5h6L6 2Z", "M3 2h6L6 5Z"].map((d) => <span key={d} className="flex h-[9px] items-center justify-center border border-[#adadad] bg-[#eee]"><svg width="12" height="7"><path d={d} /></svg></span>)}
            </div>
          </div>
        </div>
      </div>
      <div className="h-1 shrink-0 border-b border-[#c2c8de]" />
      <div className="flex h-[19px] shrink-0 text-center text-[12px] leading-[19px]">
        {status.map(([t, w]) => <div key={t} className="shrink-0 whitespace-nowrap border-r border-[#c2c8de]" style={{ width: w }}>{t}</div>)}
        <div className="flex w-[168px] shrink-0 items-center border-r border-[#c2c8de] pl-[3px]"><span className="mr-[2px] size-[14px] bg-black" />默认值</div>
        {modes.map(([t, w, on]) => <div key={t} className={"shrink-0 whitespace-nowrap border-r border-[#c2c8de] " + (on ? "bg-[#e5f3fb] font-bold" : "")} style={{ width: w }}>{t}</div>)}
        <div className="mr-[7px] grow whitespace-nowrap border-r border-[#c2c8de] pl-px text-left tracking-[0.12px]">距离上次保存的时间 (分钟): 7</div>
      </div>
      <div className="flex h-2 shrink-0 overflow-hidden bg-[#062c2b]">
        <span className="ml-[686px] w-12 bg-[#405c5a]" />
        <span className="ml-auto mr-[70px] pt-[4px] text-[12px] leading-[12px] text-white">22:28</span>
      </div>

      <Bird />
      <Gauge />
      <Tooltip />
      <SogouBar />
    </div>
  );
}
